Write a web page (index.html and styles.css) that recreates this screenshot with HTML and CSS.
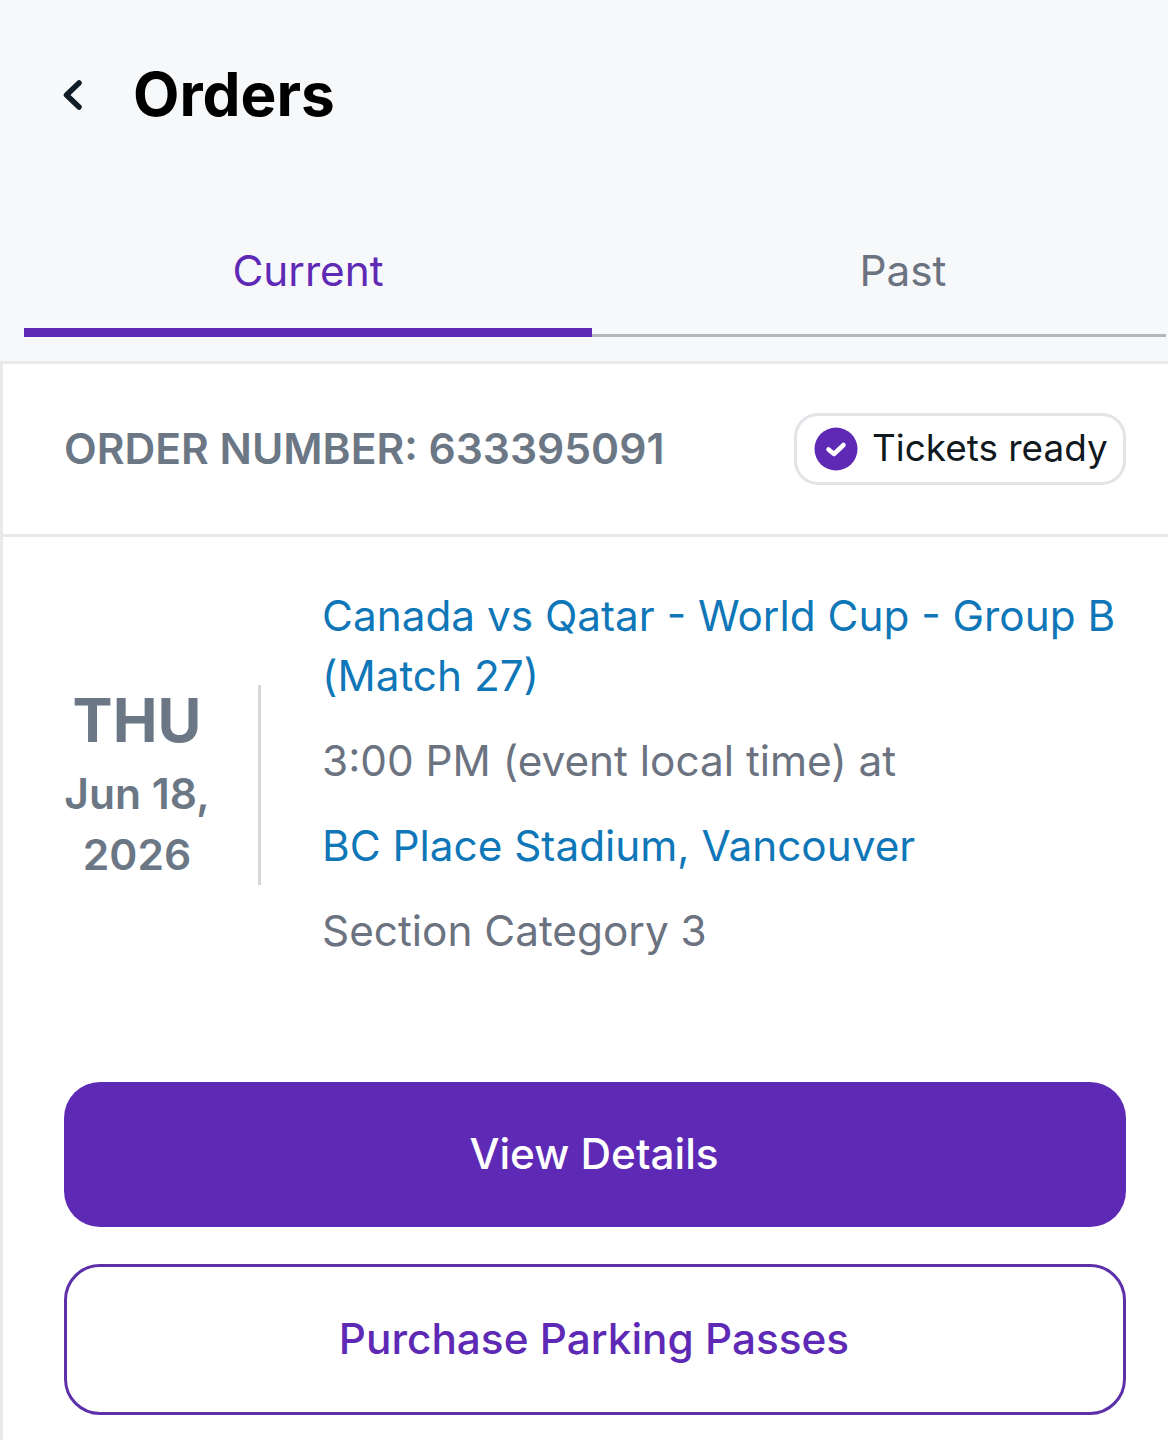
FILE: index.html
```html
<!DOCTYPE html>
<html lang="en">
<head>
    <meta charset="UTF-8">
    <meta name="viewport" content="width=device-width, initial-scale=1.0">
    <title>Orders</title>
    <link rel="stylesheet" href="styles.css">
</head>
<body>
    <header class="top-bar">
        <svg class="back-icon" width="22" height="34" viewBox="0 0 22 34" aria-hidden="true">
            <path d="M18 5 L5.5 17 L18 29" fill="none" stroke="#111c26" stroke-width="5.5" stroke-linecap="round" stroke-linejoin="round"/>
        </svg>
        <h1 class="page-title">Orders</h1>
    </header>

    <nav class="tabs">
        <div class="tab tab-active">Current</div>
        <div class="tab tab-past">Past</div>
    </nav>

    <main class="order-card">
        <div class="order-head">
            <div class="order-number">ORDER NUMBER: 633395091</div>
            <div class="status-badge">
                <svg class="status-icon" width="44" height="44" viewBox="0 0 44 44" aria-hidden="true">
                    <circle cx="22" cy="22" r="21.5" fill="#5e2ab5"/>
                    <path d="M14.5 22.5 L20 27 L29.5 18" fill="none" stroke="#fff" stroke-width="4.5" stroke-linecap="round" stroke-linejoin="round"/>
                </svg>
                <span class="status-text">Tickets ready</span>
            </div>
        </div>

        <div class="order-body">
            <div class="event-row">
                <div class="event-date">
                    <div class="date-day">THU</div>
                    <div class="date-full">Jun 18, 2026</div>
                </div>
                <div class="event-info">
                    <div class="event-line link-text">Canada vs Qatar - World Cup - Group B (Match 27)</div>
                    <div class="event-line">3:00 PM (event local time) at</div>
                    <div class="event-line link-text">BC Place Stadium, Vancouver</div>
                    <div class="event-line">Section Category 3</div>
                </div>
            </div>

            <div class="btn btn-primary">View Details</div>
            <div class="btn btn-outline">Purchase Parking Passes</div>
        </div>
    </main>
</body>
</html>
```

FILE: styles.css
```css
* {
    box-sizing: border-box;
}

body {
    font-family: Inter, "Liberation Sans", sans-serif;
    background-color: #f7f8fa;
    margin: 0;
    height: 1440px;
    overflow: hidden;
}

.top-bar {
    display: flex;
    align-items: center;
    height: 190px;
    padding-left: 61px;
}

.back-icon {
    margin-right: 50px;
}

.page-title {
    margin: 0 0 2px;
    font-size: 60.3px;
    font-weight: 700;
    color: #000;
}

.tabs {
    display: flex;
    height: 147px;
    margin: 0 2px 0 24px;
    border-bottom: 3px solid #b4b6ba;
}

.tab {
    padding-top: 51px;
    margin-bottom: -3px;
    text-align: center;
    font-size: 42.3px;
    line-height: 60px;
    color: #6b7280;
}

.tab-active {
    width: 568px;
    color: #5e2ab5;
    border-bottom: 9px solid #5e2ab5;
}

.tab-past {
    flex: 1;
    padding-left: 48px;
}

.order-card {
    margin-top: 24px;
    background-color: #fff;
    border-top: 3px solid #e8e9eb;
    border-left: 3px solid #e8e9eb;
    min-height: 1079px;
}

.order-head {
    display: flex;
    align-items: center;
    justify-content: space-between;
    height: 173px;
    padding: 0 42px 2px 61px;
    border-bottom: 3px solid #e8e9eb;
}

.order-number {
    font-size: 42.6px;
    font-weight: 600;
    color: #6b7785;
}

.status-badge {
    display: flex;
    align-items: center;
    gap: 14px;
    width: 332px;
    height: 72px;
    margin-top: 2px;
    padding-left: 17px;
    border: 3px solid #e3e4e7;
    border-radius: 24px;
    font-size: 36.9px;
    color: #101820;
}

.status-text {
    margin-top: -4px;
}

.order-body {
    padding: 49px 42px 0 61px;
}

.event-row {
    display: flex;
    align-items: flex-start;
}

.event-date {
    width: 197px;
    height: 200px;
    margin-top: 99px;
    padding-right: 48px;
    margin-right: 61px;
    flex-shrink: 0;
    border-right: 3px solid #d5d7db;
    text-align: center;
    color: #6b7785;
    font-weight: 600;
}

.date-day {
    font-size: 60px;
    font-weight: 700;
    line-height: 70px;
    margin-bottom: 9px;
}

.date-full {
    font-size: 42.6px;
    line-height: 60.5px;
}

.event-info {
    display: flex;
    flex-direction: column;
    gap: 25px;
}

.event-line {
    font-size: 42.3px;
    line-height: 60px;
    color: #6b7280;
}

.link-text {
    color: #0f77b8;
}

.btn {
    display: flex;
    align-items: center;
    justify-content: center;
    padding: 0 2px 2px 0;
    border-radius: 36px;
    font-size: 42.3px;
    font-weight: 500;
}

.btn-primary {
    height: 145px;
    margin-top: 121px;
    background-color: #5e2ab5;
    color: #fff;
}

.btn-outline {
    height: 151px;
    margin-top: 37px;
    border: 3px solid #5b30a8;
    color: #5e2ab5;
}
```
